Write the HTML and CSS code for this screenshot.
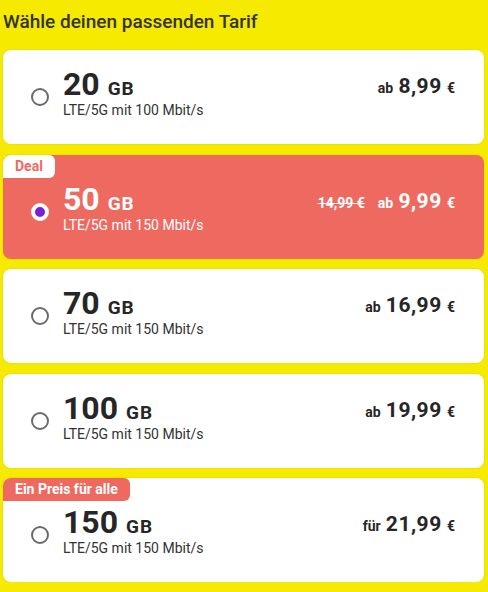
FILE: index.html
```html
<!DOCTYPE html>
<html lang="de">
<head>
<meta charset="utf-8">
<link rel="stylesheet" href="styles.css">
</head>
<body>
<div class="page">
  <h1 class="title">Wähle deinen passenden Tarif</h1>
  <div class="list">
    <div class="card">
      <span class="radio"></span>
      <div class="info">
        <div class="big">20 <span class="unit">GB</span></div>
        <div class="desc">LTE/5G mit 100 Mbit/s</div>
      </div>
      <div class="price"><span class="pre">ab</span> <span class="amount">8,99</span> <span class="cur">€</span></div>
    </div>
    <div class="card card-deal card-badged">
      <span class="badge badge-white">Deal</span>
      <span class="radio radio-on"></span>
      <div class="info">
        <div class="big">50 <span class="unit">GB</span></div>
        <div class="desc">LTE/5G mit 150 Mbit/s</div>
      </div>
      <div class="price"><span class="old">14,99 €</span><span class="pre">ab</span> <span class="amount">9,99</span> <span class="cur">€</span></div>
    </div>
    <div class="card">
      <span class="radio"></span>
      <div class="info">
        <div class="big">70 <span class="unit">GB</span></div>
        <div class="desc">LTE/5G mit 150 Mbit/s</div>
      </div>
      <div class="price"><span class="pre">ab</span> <span class="amount">16,99</span> <span class="cur">€</span></div>
    </div>
    <div class="card">
      <span class="radio"></span>
      <div class="info">
        <div class="big">100 <span class="unit">GB</span></div>
        <div class="desc">LTE/5G mit 150 Mbit/s</div>
      </div>
      <div class="price"><span class="pre">ab</span> <span class="amount">19,99</span> <span class="cur">€</span></div>
    </div>
    <div class="card card-badged">
      <span class="badge badge-red">Ein Preis für alle</span>
      <span class="radio"></span>
      <div class="info">
        <div class="big">150 <span class="unit">GB</span></div>
        <div class="desc">LTE/5G mit 150 Mbit/s</div>
      </div>
      <div class="price"><span class="pre">für</span> <span class="amount">21,99</span> <span class="cur">€</span></div>
    </div>
  </div>
</div>
</body>
</html>
```

FILE: styles.css
```css
html, body {
  margin: 0;
  padding: 0;
  background: #f6ea00;
}

body {
  font-family: Roboto, "Liberation Sans", sans-serif;
  color: #262626;
}

.page {
  padding: 10px 4px 0 3px;
}

.title {
  margin: 0 0 16px 0;
  font-size: 19px;
  line-height: 24px;
  font-weight: 500;
  color: #333;
}

.list {
  display: flex;
  flex-direction: column;
  gap: 10.5px;
}

.card {
  position: relative;
  display: flex;
  align-items: center;
  background: #fff;
  border-radius: 8px;
  padding: 16px 29px 16px 28px;
  box-shadow: 0 0 2px rgba(0, 0, 0, 0.12);
}

.card-badged {
  padding-top: 26px;
}

.card-deal {
  background: #ee6a61;
  color: #fff;
}

.badge {
  position: absolute;
  top: 0;
  left: 0;
  height: 23px;
  line-height: 23px;
  padding: 0 12px;
  font-size: 14px;
  font-weight: 700;
  border-radius: 8px 6px 6px 0;
}

.badge-white {
  background: #fff;
  color: #ee6a61;
}

.badge-red {
  background: #ee6a61;
  color: #fff;
}

.radio {
  flex: none;
  width: 18px;
  height: 18px;
  box-sizing: border-box;
  border: 2px solid #6b6b6b;
  border-radius: 50%;
  margin-right: 14px;
  background: #fff;
}

.radio-on {
  border: 4px solid #fff;
  background: #7a1fd6;
}

.info {
  flex: 1;
  padding-bottom: 10px;
}

.big {
  font-size: 32px;
  line-height: 36px;
  font-weight: 700;
}

.unit {
  font-size: 19px;
  line-height: 1;
  letter-spacing: 1px;
}

.desc {
  font-size: 14px;
  line-height: 16px;
  color: #333;
}

.card-deal .desc {
  color: #fff;
}

.price {
  align-self: flex-start;
  margin-top: 2px;
  font-size: 21px;
  line-height: 36px;
  font-weight: 700;
  white-space: nowrap;
}

.pre,
.cur,
.old {
  font-size: 14px;
  line-height: 1;
}

.amount {
  font-size: 21px;
  letter-spacing: 0.5px;
}

.old {
  text-decoration: line-through;
  margin-right: 13px;
}
```
